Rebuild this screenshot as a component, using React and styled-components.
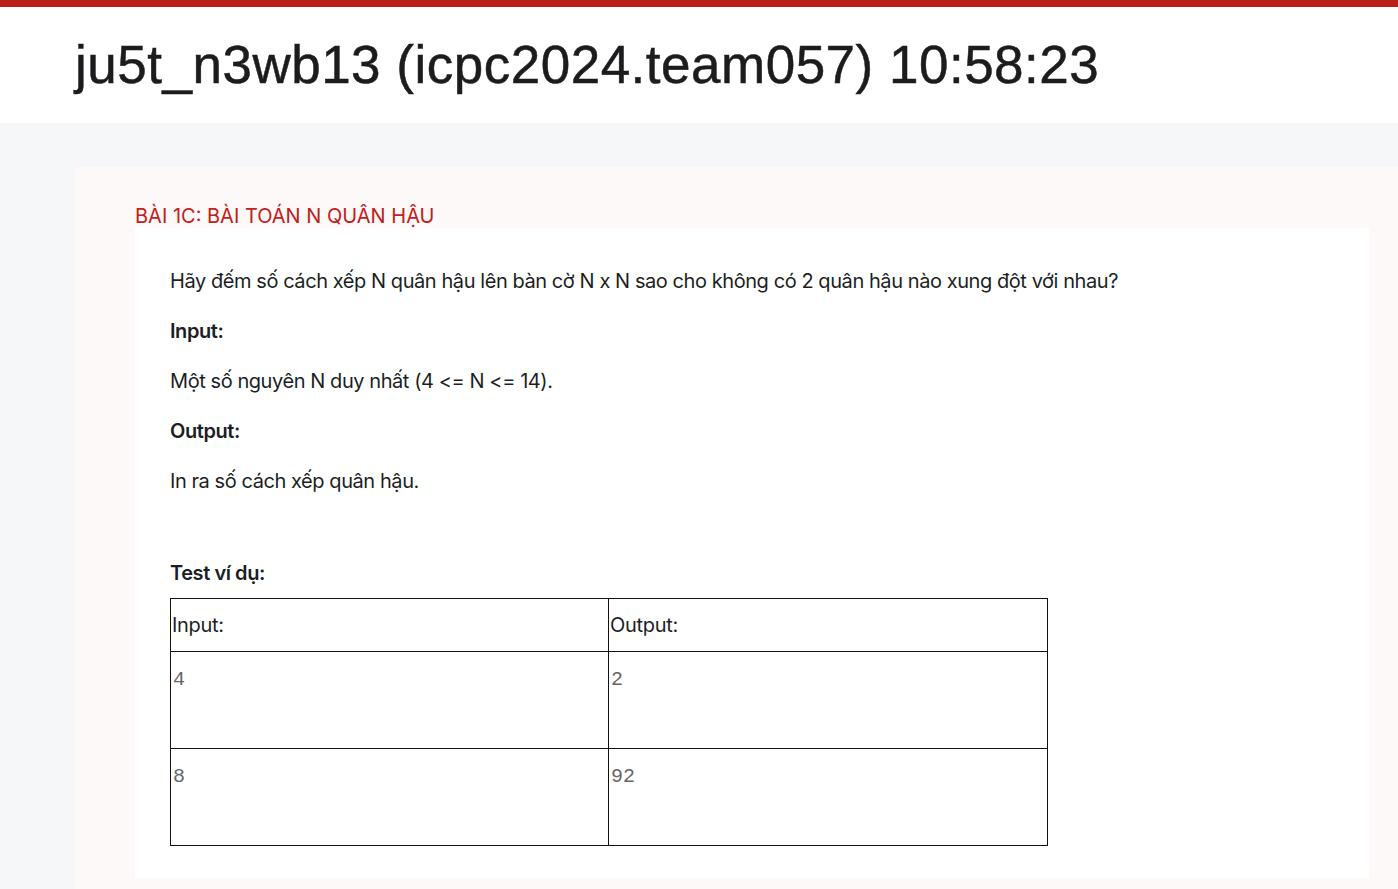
import React from "react";
import styled, { createGlobalStyle } from "styled-components";

const Global = createGlobalStyle`
  html, body { margin: 0; padding: 0; }
  body {
    background: #f6f7f9;
    font-family: Inter, "Noto Sans", sans-serif;
    color: #1f2328;
    overflow: hidden;
  }
`;

const Page = styled.div`
  display: flex;
  flex-direction: column;
  min-height: 889px;
`;

const TopStripe = styled.div`
  height: 7px;
  background: #bb1f1b;
`;

const Header = styled.header`
  background: #ffffff;
  height: 116px;
  display: flex;
  align-items: center;
  padding-left: 75px;
`;

const Title = styled.h1`
  margin: 0;
  font-family: "Liberation Sans", Arial, sans-serif;
  font-weight: 400;
  font-size: 53px;
  letter-spacing: 0.5px;
  color: #1c1c1e;
  -webkit-text-stroke: 0.5px #1c1c1e;
  padding-bottom: 2px;
`;

const Main = styled.main`
  flex: 1;
  display: flex;
  padding: 44px 0 0 75px;
`;

const Card = styled.section`
  flex: 1;
  background: #fdf9f8;
  padding: 38px 29px 12px 60px;
  display: flex;
  flex-direction: column;
`;

const ProblemTitle = styled.h2`
  margin: 0;
  font-size: 20px;
  line-height: 23px;
  font-weight: 400;
  color: #c1201b;
  letter-spacing: 0;
`;

const Statement = styled.div`
  background: #ffffff;
  padding: 38px 35px 32px 35px;
  flex: 1;
`;

const Para = styled.p`
  margin: 0 0 ${(p) => (p.$last ? 0 : 20)}px 0;
  font-size: 20px;
  line-height: 30px;
  letter-spacing: -0.43px;
  font-weight: ${(p) => (p.$bold ? 600 : 400)};
  color: #1b1f24;
`;

const Spacer = styled.div`
  height: ${(p) => p.$h}px;
`;

const Table = styled.table`
  border-collapse: collapse;
  width: 878px;
  margin-top: 10px;
`;

const HeadCell = styled.td`
  border: 1px solid #111;
  height: 52px;
  padding: 0 1px;
  font-size: 20px;
  letter-spacing: -0.3px;
  color: #1b1f24;
  vertical-align: middle;
  width: ${(p) => p.$w || "auto"};
`;

const DataCell = styled.td`
  border: 1px solid #111;
  height: 96px;
  padding: 0 2px;
  vertical-align: top;
`;

const Pre = styled.pre`
  margin: 17px 0 0 0;
  font-family: "Liberation Mono", "Courier New", monospace;
  font-size: 20px;
  line-height: 22px;
  color: #666;
`;

const examples = [
  { input: "4", output: "2" },
  { input: "8", output: "92" },
];

export default function App() {
  return (
    <Page>
      <Global />
      <TopStripe />
      <Header>
        <Title>ju5t_n3wb13 (icpc2024.team057) 10:58:23</Title>
      </Header>
      <Main>
        <Card>
          <ProblemTitle>BÀI 1C: BÀI TOÁN N QUÂN HẬU</ProblemTitle>
          <Statement>
            <Para>
              Hãy đếm số cách xếp N quân hậu lên bàn cờ N x N sao cho không có 2 quân hậu nào xung đột với nhau?
            </Para>
            <Para $bold>Input:</Para>
            <Para>Một số nguyên N duy nhất (4 &lt;= N &lt;= 14).</Para>
            <Para $bold>Output:</Para>
            <Para>In ra số cách xếp quân hậu.</Para>
            <Spacer $h={42} />
            <Para $bold $last>Test ví dụ:</Para>
            <Table>
              <tbody>
                <tr>
                  <HeadCell $w="435px">Input:</HeadCell>
                  <HeadCell>Output:</HeadCell>
                </tr>
                {examples.map((ex) => (
                  <tr key={ex.input}>
                    <DataCell>
                      <Pre>{ex.input}</Pre>
                    </DataCell>
                    <DataCell>
                      <Pre>{ex.output}</Pre>
                    </DataCell>
                  </tr>
                ))}
              </tbody>
            </Table>
          </Statement>
        </Card>
      </Main>
    </Page>
  );
}
